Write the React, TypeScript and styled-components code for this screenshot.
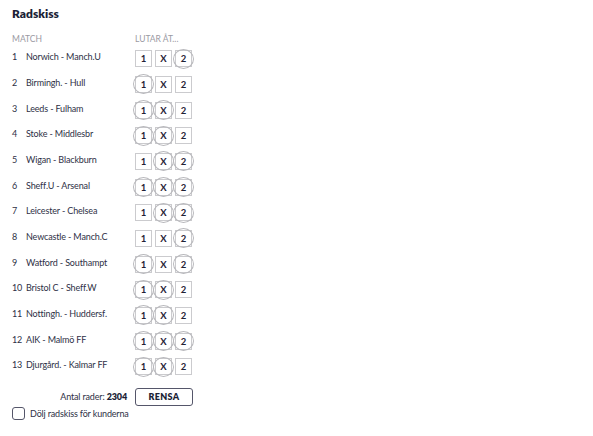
import React, { useState } from 'react';
import styled, { createGlobalStyle } from 'styled-components';

const GlobalStyle = createGlobalStyle`
    html, body {
        margin: 0;
        padding: 0;
        background: #ffffff;
    }
    body {
        font-family: Lato, "Open Sans", "Liberation Sans", sans-serif;
        color: #2a2c3f;
    }
`;

type Pick = '1' | 'X' | '2';

const matches: { team: string; picks: Pick[] }[] = [
    { team: 'Norwich - Manch.U', picks: ['2'] },
    { team: 'Birmingh. - Hull', picks: ['1'] },
    { team: 'Leeds - Fulham', picks: ['1', 'X'] },
    { team: 'Stoke - Middlesbr', picks: ['1', 'X'] },
    { team: 'Wigan - Blackburn', picks: ['X', '2'] },
    { team: 'Sheff.U - Arsenal', picks: ['1', 'X', '2'] },
    { team: 'Leicester - Chelsea', picks: ['X', '2'] },
    { team: 'Newcastle - Manch.C', picks: ['2'] },
    { team: 'Watford - Southampt', picks: ['1', '2'] },
    { team: 'Bristol C - Sheff.W', picks: ['1', 'X'] },
    { team: 'Nottingh. - Huddersf.', picks: ['1', 'X'] },
    { team: 'AIK - Malmö FF', picks: ['1', 'X', '2'] },
    { team: 'Djurgård. - Kalmar FF', picks: ['1', 'X'] },
];

const Panel = styled.section`
    width: 207px;
    box-sizing: border-box;
    padding: 7px 12px 8px 12px;
    display: flex;
    flex-direction: column;
`;

const Title = styled.h2`
    margin: 0;
    font-size: 12px;
    line-height: 14px;
    font-weight: 800;
    color: #1c1f36;
`;

const Columns = styled.div`
    display: grid;
    grid-template-columns: 123px 1fr;
    align-items: center;
`;

const HeaderRow = styled(Columns)`
    margin-top: 12px;
    height: 12px;
    font-size: 8.5px;
    color: #9a9aa3;
    text-transform: uppercase;
`;

const List = styled.div`
    margin-top: 1px;
    display: grid;
    grid-auto-rows: 25.67px;
`;

const Row = styled.div`
    display: grid;
    grid-template-columns: 14px 109px 1fr;
    align-items: center;
    font-size: 9px;
    color: #2e3045;
`;

// the match text sits a little above the centre of the pick boxes
const Num = styled.span`
    letter-spacing: -0.3px;
    margin-top: -4px;
`;

const Team = styled.span`
    white-space: nowrap;
    letter-spacing: -0.15px;
    margin-top: -4px;
`;

const Picks = styled.div`
    display: flex;
    gap: 3px;
`;

const Box = styled.div`
    position: relative;
    width: 17px;
    height: 17px;
    box-sizing: border-box;
    border: 1px solid #cbcbce;
    display: flex;
    align-items: center;
    justify-content: center;
    font-size: 9.5px;
    font-weight: 700;
    color: #1f2135;
    background: #fff;
`;

const Ring = styled.span`
    position: absolute;
    left: 50%;
    top: 50%;
    width: 21px;
    height: 20px;
    margin: -10px 0 0 -10.5px;
    box-sizing: border-box;
    border: 1px solid #b8b8bc;
    border-radius: 50%;
    pointer-events: none;
`;

const Footer = styled(Columns)`
    margin-top: 8px;
    height: 18px;
`;

const Count = styled.span`
    justify-self: end;
    padding-right: 8px;
    font-size: 9px;
    color: #2e3045;
    letter-spacing: -0.15px;

    b {
        font-weight: 800;
        color: #1c1f36;
    }
`;

const ClearButton = styled.button`
    width: 58px;
    height: 18px;
    padding: 0;
    box-sizing: border-box;
    border: 1px solid #55566a;
    border-radius: 3px;
    background: #fff;
    font-family: inherit;
    font-size: 9px;
    font-weight: 800;
    letter-spacing: 0.3px;
    color: #1c1f36;
    cursor: pointer;
`;

const CheckLabel = styled.label`
    margin-top: 1px;
    display: flex;
    align-items: center;
    gap: 5px;
    font-size: 9px;
    letter-spacing: -0.15px;
    color: #2e3045;
    cursor: pointer;
`;

const CheckBox = styled.span`
    width: 13px;
    height: 13px;
    box-sizing: border-box;
    border: 1px solid #55566a;
    border-radius: 3px;
    background: #fff;
`;

const App = () => {
    const [hidden, setHidden] = useState(false);

    return (
        <>
            <GlobalStyle />
            <Panel>
                <Title>Radskiss</Title>
                <HeaderRow>
                    <span>Match</span>
                    <span>Lutar åt...</span>
                </HeaderRow>
                <List>
                    {matches.map((m, i) => (
                        <Row key={m.team}>
                            <Num>{i + 1}</Num>
                            <Team>{m.team}</Team>
                            <Picks>
                                {(['1', 'X', '2'] as Pick[]).map((p) => (
                                    <Box key={p}>
                                        {p}
                                        {m.picks.includes(p) && <Ring />}
                                    </Box>
                                ))}
                            </Picks>
                        </Row>
                    ))}
                </List>
                <Footer>
                    <Count>
                        Antal rader: <b>2304</b>
                    </Count>
                    <ClearButton>RENSA</ClearButton>
                </Footer>
                <CheckLabel onClick={() => setHidden(!hidden)}>
                    <CheckBox />
                    Dölj radskiss för kunderna
                </CheckLabel>
            </Panel>
        </>
    );
};

export default App;
